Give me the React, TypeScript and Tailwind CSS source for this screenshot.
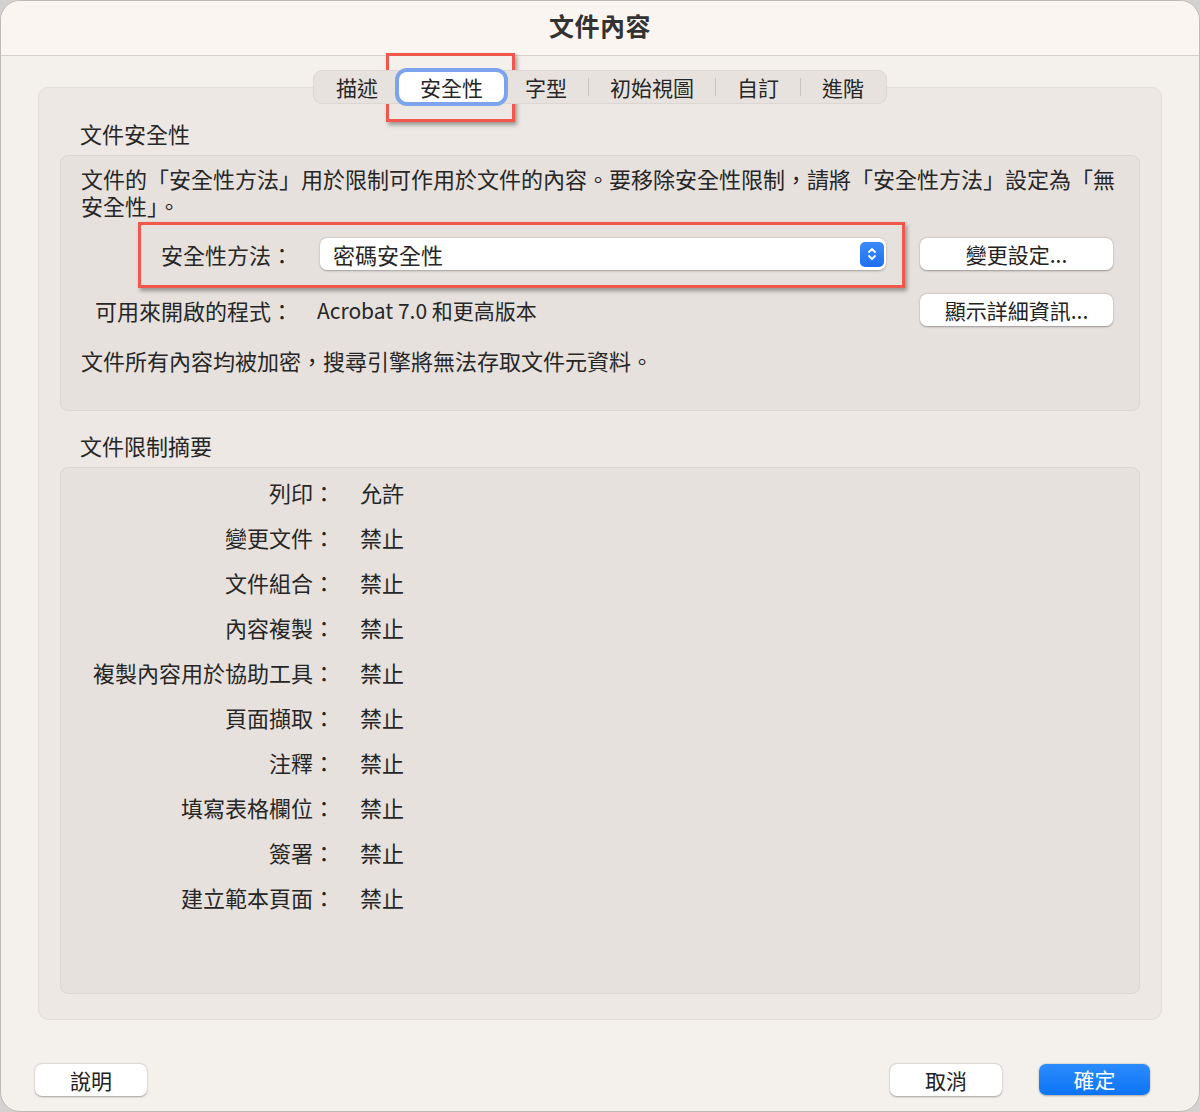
import React from 'react'

const FONT = { fontFamily: '"Noto Sans CJK TC", "Noto Sans", "Liberation Sans", sans-serif' }

const tabs = ['描述', '安全性', '字型', '初始視圖', '自訂', '進階']
const ACTIVE = 1

const limits: [string, string][] = [
  ['列印：', '允許'],
  ['變更文件：', '禁止'],
  ['文件組合：', '禁止'],
  ['內容複製：', '禁止'],
  ['複製內容用於協助工具：', '禁止'],
  ['頁面擷取：', '禁止'],
  ['注釋：', '禁止'],
  ['填寫表格欄位：', '禁止'],
  ['簽署：', '禁止'],
  ['建立範本頁面：', '禁止'],
]

function MacButton({ children, className = '' }: { children: React.ReactNode; className?: string }) {
  return (
    <button
      className={`h-[32px] rounded-[7px] bg-white text-[21px] leading-none text-[#222] shadow-[0_0.5px_2px_rgba(0,0,0,0.35)] ${className}`}
    >
      {children}
    </button>
  )
}

function Stepper() {
  return (
    <span className="flex h-[25px] w-[24px] items-center justify-center rounded-[5px] bg-gradient-to-b from-[#3d8bf8] to-[#1d6ff1]">
      <svg width="10" height="16" viewBox="0 0 10 16" fill="none" stroke="white" strokeWidth="1.8" strokeLinecap="round" strokeLinejoin="round">
        <path d="M2 6 L5 3 L8 6" />
        <path d="M2 10 L5 13 L8 10" />
      </svg>
    </span>
  )
}

export default function App() {
  return (
    <div className="relative h-[1112px] w-[1200px] overflow-hidden bg-[#d4d2d1] text-[#262626]" style={FONT}>
      <div className="flex h-full w-full flex-col overflow-hidden rounded-[20px] border border-[#bdbab8] bg-[#f4f0ec]">
        {/* Title bar */}
        <div className="flex h-[55px] shrink-0 items-center justify-center border-b border-[#d6d1cd] bg-[#fbf5f1] pb-[4px]">
          <span className="text-[25px] font-semibold tracking-[0.5px] text-[#333]">文件內容</span>
        </div>

        <div className="flex flex-1 flex-col px-[37px] pt-[14px]">
          {/* Tabs */}
          <div className="relative z-10 flex justify-center">
            <div className="flex h-[34px] items-center rounded-[9px] border border-[#dcd7d3] bg-[#e7e2de] px-px text-[21px]">
              {tabs.map((t, i) => {
                const sep = i > ACTIVE + 1
                return (
                  <React.Fragment key={t}>
                    {sep && <span className="h-[18px] w-px bg-[#c9c4c0]" />}
                    {i === ACTIVE ? (
                      <span className="flex h-[30px] items-center rounded-[8px] bg-white px-[21px] leading-none ring-[4px] ring-[#7ea3ed]">
                        {t}
                      </span>
                    ) : (
                      <span className="px-[21px] leading-none">{t}</span>
                    )}
                  </React.Fragment>
                )
              })}
            </div>
          </div>

          {/* Main box */}
          <div className="-mt-[17px] rounded-[10px] border border-[#e2ddd9] bg-[#ede8e4] px-[21px] pb-[25px] pt-[32px]">
            <div className="pb-[4px] pl-[20px] text-[22px] leading-[26px]">文件安全性</div>

            <div className="mt-[5px] rounded-[8px] border border-[#dcd7d3] bg-[#e6e1dd] pb-[36px] pl-[20px] pr-[22px] pt-[9px]">
              <p className="text-[22px] leading-[27px]">
                文件的「安全性方法」用於限制可作用於文件的內容。要移除安全性限制，請將「安全性方法」設定為「無安全性」。
              </p>

              <div className="mt-[19px] flex items-center">
                <div className="w-[212px] text-right text-[22px] leading-none">安全性方法：</div>
                <div className="ml-[27px] flex h-[32px] w-[566px] items-center justify-between rounded-[7px] bg-white pl-[13px] pr-[2px] shadow-[0_0.5px_2px_rgba(0,0,0,0.3)]">
                  <span className="text-[22px] leading-none">密碼安全性</span>
                  <Stepper />
                </div>
                <MacButton className="ml-[34px] w-[193px]">變更設定...</MacButton>
              </div>

              <div className="mt-[24px] flex items-center">
                <div className="w-[212px] text-right text-[22px] leading-none">可用來開啟的程式：</div>
                <div className="ml-[24px] w-[570px] text-[21px] leading-none">Acrobat 7.0 和更高版本</div>
                <MacButton className="ml-[33px] w-[193px]">顯示詳細資訊...</MacButton>
              </div>

              <p className="mt-[21px] text-[22px] leading-[27px]">文件所有內容均被加密，搜尋引擎將無法存取文件元資料。</p>
            </div>

            <div className="mt-[21px] pb-[4px] pl-[20px] text-[22px] leading-[26px]">文件限制摘要</div>

            <div className="mt-[5px] h-[527px] rounded-[8px] border border-[#dcd7d3] bg-[#e6e1dd] pt-[1px]">
              {limits.map(([k, v]) => (
                <div key={k} className="flex h-[45px] items-center text-[22px] leading-none">
                  <span className="w-[274px] text-right">{k}</span>
                  <span className="ml-[25px]">{v}</span>
                </div>
              ))}
            </div>
          </div>

          {/* Footer */}
          <div className="mt-auto flex items-center pb-[15px] pr-[12px]">
            <MacButton className="-ml-[3px] h-[31px] w-[112px]">說明</MacButton>
            <div className="ml-auto flex gap-[37px]">
              <MacButton className="h-[31px] w-[112px]">取消</MacButton>
              <button className="h-[31px] w-[111px] rounded-[7px] bg-gradient-to-b from-[#2b8cfd] to-[#0b74f5] text-[21px] leading-none text-white shadow-[0_0.5px_2px_rgba(0,0,0,0.3)]">
                確定
              </button>
            </div>
          </div>
        </div>
      </div>

      {/* Annotation frames */}
      <div className="pointer-events-none absolute left-[386px] top-[53px] h-[69px] w-[129px] border-[3px] border-[#f0584d] shadow-[2px_3px_4px_rgba(0,0,0,0.35)]" />
      <div className="pointer-events-none absolute left-[138px] top-[222px] h-[66px] w-[767px] border-[3px] border-[#f0584d] shadow-[2px_3px_4px_rgba(0,0,0,0.35)]" />
    </div>
  )
}
